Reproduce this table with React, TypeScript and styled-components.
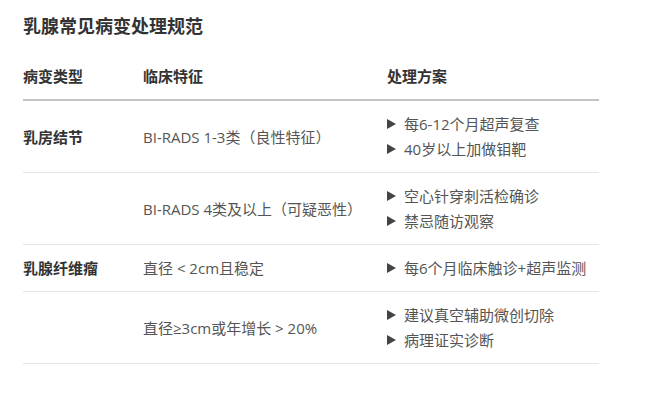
import React from 'react';
import styled, { createGlobalStyle } from 'styled-components';

type Row = {
  type?: string;
  feature: string;
  plan: string[];
};

const rows: Row[] = [
  { type: '乳房结节', feature: 'BI-RADS 1-3类（良性特征）', plan: ['每6-12个月超声复查', '40岁以上加做钼靶'] },
  { feature: 'BI-RADS 4类及以上（可疑恶性）', plan: ['空心针穿刺活检确诊', '禁忌随访观察'] },
  { type: '乳腺纤维瘤', feature: '直径 < 2cm且稳定', plan: ['每6个月临床触诊+超声监测'] },
  { feature: '直径≥3cm或年增长 > 20%', plan: ['建议真空辅助微创切除', '病理证实诊断'] },
];

const GlobalStyle = createGlobalStyle`
  body {
    margin: 0;
    background: #fff;
    font-family: 'Open Sans', 'Noto Sans CJK SC', sans-serif;
    color: #555;
  }
`;

const Page = styled.div`
  padding: 12px 23px;
`;

const Title = styled.h2`
  margin: 0 0 15px;
  font-size: 18px;
  line-height: 26px;
  font-weight: bold;
  color: #333;
  font-family: 'Noto Sans CJK SC', sans-serif;
`;

const Table = styled.table`
  width: 576px;
  border-collapse: collapse;
  table-layout: fixed;
  font-size: 15px;
`;

const Th = styled.th<{ $width: number }>`
  width: ${(p) => p.$width}px;
  text-align: left;
  padding: 11px 0;
  line-height: 24px;
  font-weight: bold;
  color: #333;
  border-bottom: 2px solid #c4c4c4;
`;

const Tr = styled.tr`
  border-bottom: 1px solid #e6e6e6;
`;

const Td = styled.td<{ $bold?: boolean }>`
  padding: 11px 0;
  line-height: 24px;
  vertical-align: middle;
  font-weight: ${(p) => (p.$bold ? 'bold' : 'normal')};
  color: ${(p) => (p.$bold ? '#333' : '#555')};
`;

const PlanList = styled.ul`
  list-style: none;
  margin: 0;
  padding: 0;
  display: flex;
  flex-direction: column;
  gap: 1px;
`;

const PlanItem = styled.li`
  display: flex;
  align-items: center;

  &::before {
    content: '';
    width: 0;
    height: 0;
    border-left: 9px solid #444;
    border-top: 5px solid transparent;
    border-bottom: 5px solid transparent;
    margin-right: 8px;
  }
`;

const App = () => {
  return (
    <Page>
      <GlobalStyle />
      <Title>乳腺常见病变处理规范</Title>
      <Table>
        <thead>
          <tr>
            <Th $width={120}>病变类型</Th>
            <Th $width={244}>临床特征</Th>
            <Th $width={212}>处理方案</Th>
          </tr>
        </thead>
        <tbody>
          {rows.map((row, i) => (
            <Tr key={i}>
              <Td $bold>{row.type}</Td>
              <Td>{row.feature}</Td>
              <Td>
                <PlanList>
                  {row.plan.map((p) => (
                    <PlanItem key={p}>{p}</PlanItem>
                  ))}
                </PlanList>
              </Td>
            </Tr>
          ))}
        </tbody>
      </Table>
    </Page>
  );
};

export default App;
